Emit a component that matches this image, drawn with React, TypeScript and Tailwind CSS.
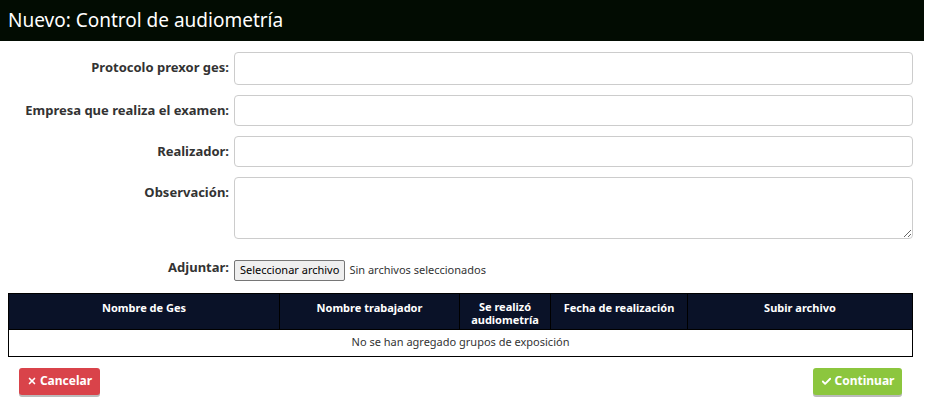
import { X, Check } from 'lucide-react'

export default function App() {
  const label = 'w-[234px] shrink-0 text-right pr-[5px] text-[13px] font-bold text-[#333]'
  const input = 'flex-1 rounded border border-[#ccc] bg-white'
  return (
    <div className="w-[926px] h-[408px] bg-white [font-family:'Liberation_Sans',Arial,sans-serif] text-[#333]">
      <div className="h-[41px] w-[924px] bg-[#020c02] flex items-center px-[8px]">
        <h1 className="text-[19px] text-white">Nuevo: Control de audiometría</h1>
      </div>
      <div className="pt-[11px] pr-[13px] flex flex-col gap-[10px]">
        <div className="flex items-start">
          <label className={`${label} pt-[6px]`}>Protocolo prexor ges:</label>
          <div className={`${input} h-[33px]`} />
        </div>
        <div className="flex items-start">
          <label className={`${label} pt-[6px]`}>Empresa que realiza el examen:</label>
          <div className={`${input} h-[31px]`} />
        </div>
        <div className="flex items-start">
          <label className={`${label} pt-[6px]`}>Realizador:</label>
          <div className={`${input} h-[31px]`} />
        </div>
        <div className="flex items-start">
          <label className={`${label} pt-[6px]`}>Observación:</label>
          <textarea className={`${input} h-[62px] resize-y`} />
        </div>
        <div className="flex items-start mt-[5px]">
          <label className={`${label} pt-[4px]`}>Adjuntar:</label>
          <div className="flex items-center gap-[4px] text-[11px] mt-[6px]">
            <span className="border border-[#767676] bg-[#efefef] rounded-[2px] px-[5px] py-[1px] text-black">Seleccionar archivo</span>
            <span>Sin archivos seleccionados</span>
          </div>
        </div>
      </div>
      <table className="ml-[8px] mt-[12px] w-[905px] border border-black border-collapse text-[11px]">
        <thead>
          <tr className="bg-[#0a1228] text-white font-bold h-[36px] align-top">
            <th className="w-[271px] pt-[6px] border-r border-black">Nombre de Ges</th>
            <th className="w-[180px] pt-[6px] border-r border-black">Nombre trabajador</th>
            <th className="w-[91px] pt-[6px] border-r border-black leading-[13px]">Se realizó<br />audiometría</th>
            <th className="w-[137px] pt-[6px] border-r border-black">Fecha de realización</th>
            <th className="pt-[6px]">Subir archivo</th>
          </tr>
        </thead>
        <tbody>
          <tr className="h-[27px]">
            <td colSpan={5} className="text-center border-t border-black">No se han agregado grupos de exposición</td>
          </tr>
        </tbody>
      </table>
      <div className="flex justify-between ml-[19px] mr-[24px] mt-[11px]">
        <button className="h-[27px] w-[81px] rounded-[3px] bg-[#d9434a] text-white text-[12px] font-bold shadow-[0_2px_0_#bbb] flex items-center justify-center gap-[3px]">
          <X size={10} strokeWidth={4} />Cancelar
        </button>
        <button className="h-[27px] w-[89px] rounded-[3px] bg-[#8cc63e] text-white text-[12px] font-bold shadow-[0_2px_0_#bbb] flex items-center justify-center gap-[3px]">
          <Check size={11} strokeWidth={4} />Continuar
        </button>
      </div>
    </div>
  )
}
